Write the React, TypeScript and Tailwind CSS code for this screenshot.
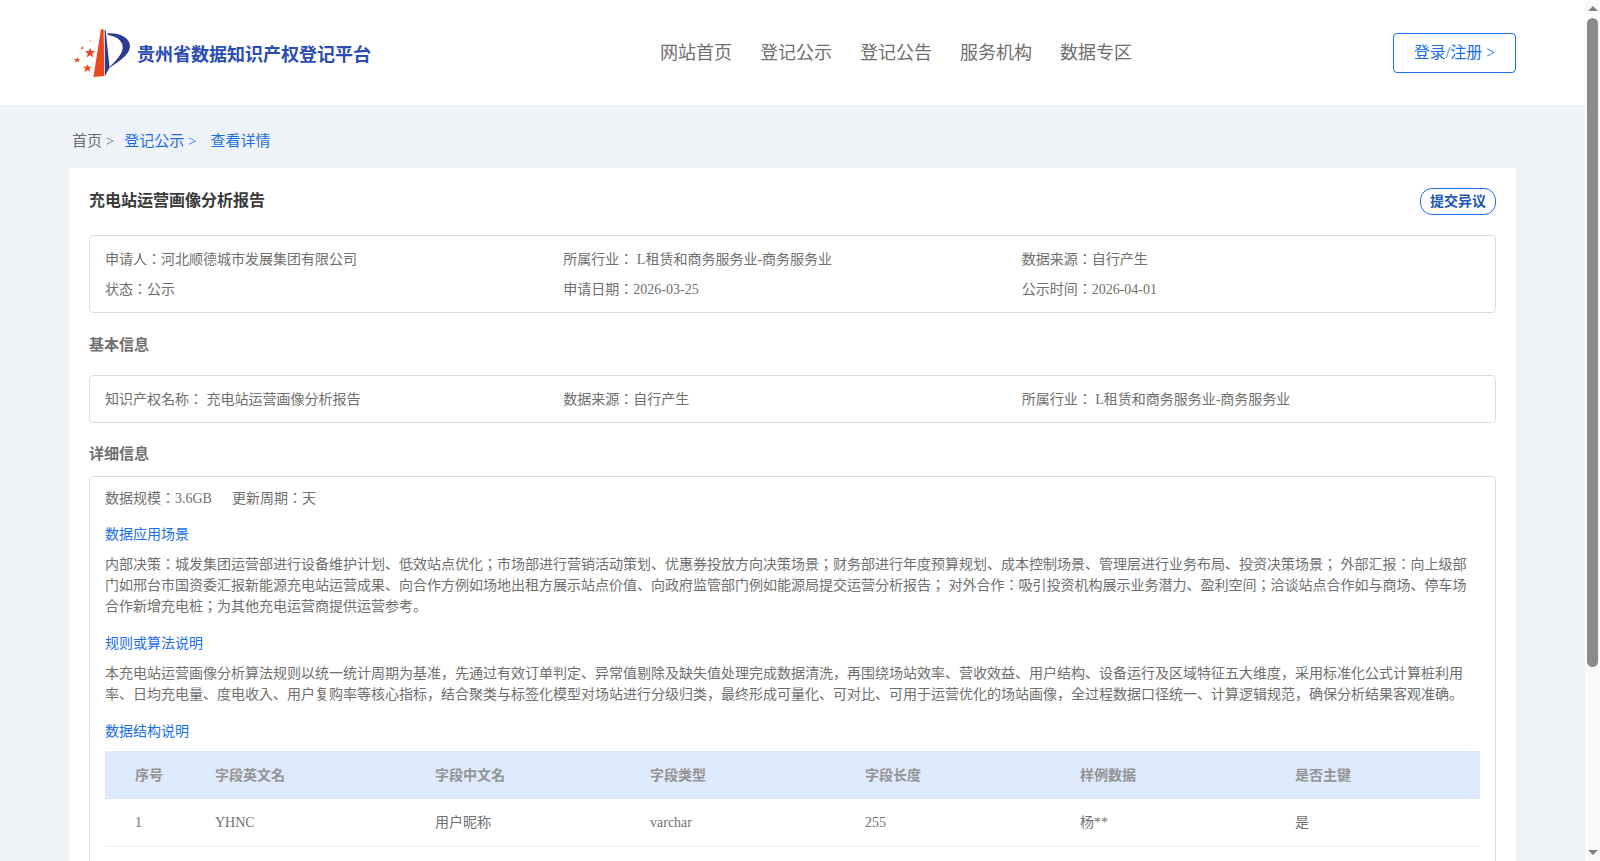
const serif = "font-['Liberation_Serif','Noto_Sans_CJK_JP',serif]";

const nav = ["网站首页", "登记公示", "登记公告", "服务机构", "数据专区"];
const columns = ["序号", "字段英文名", "字段中文名", "字段类型", "字段长度", "样例数据", "是否主键"];
const row = ["1", "YHNC", "用户昵称", "varchar", "255", "杨**", "是"];

function Logo() {
  return (
    <svg width="58" height="50" viewBox="65 52 176 152" className="shrink-0">
      <path d="M150 56 L158 56 L160 198 L127 201 Z" fill="#e8491d" />
      <path d="M161 58 L164 58 L176 172 L162 198 Z" fill="#2d3a92" />
      <path d="M170 68 C212 66 240 84 238 110 C236 136 200 156 172 176 C196 150 216 132 216 110 C216 90 196 76 170 73 Z" fill="#2d3a92" />
      <polygon points="117,112 121,122 132,122 123,130 127,142 117,135 106,142 110,130 101,122 113,122" fill="#e8491d" />
      <polygon points="109,162 112,170 122,170 114,176 118,186 109,180 99,186 103,176 95,170 105,170" fill="#e8491d" />
      <polygon points="78,140 80,146 87,146 82,150 84,157 78,153 71,157 73,150 68,146 76,146" fill="#e8491d" />
      <circle cx="93" cy="113" r="4" fill="#ee7a52" />
      <circle cx="118" cy="92" r="2.5" fill="#f0a080" />
    </svg>
  );
}

function Header() {
  return (
    <header className="flex h-[105px] items-center bg-white pl-[73px] pr-[69px]">
      <div className="flex w-[587px] items-center gap-[6px]">
        <Logo />
        <span className="pt-[5px] text-[18px] font-bold text-[#2b4db3]">贵州省数据知识产权登记平台</span>
      </div>
      <nav className="flex gap-[28px] pt-[2px] text-[18px] text-[#6f6f6f]">
        {nav.map((n) => (
          <a key={n}>{n}</a>
        ))}
      </nav>
      <button className="ml-auto h-[40px] w-[123px] rounded-[4px] border border-[#1a6fe8] pt-[1px] text-[16px] text-[#1a6fe8]">
        登录/注册 &gt;
      </button>
    </header>
  );
}

function InfoBox({ items }: { items: string[] }) {
  return (
    <div className="grid grid-cols-3 gap-y-[9px] rounded-[4px] border border-[#dddddd] px-[15px] pb-[12px] pt-[13px] text-[14px] leading-[21px] text-[#6f6f6f]">
      {items.map((t) => (
        <div key={t}>{t}</div>
      ))}
    </div>
  );
}

function Scrollbar() {
  return (
    <div className="flex w-[15px] shrink-0 flex-col items-center bg-[#fafafa]">
      <div className="mt-[6px] h-0 w-0 border-x-[5px] border-b-[5px] border-x-transparent border-b-[#808080]" />
      <div className="mt-[7px] h-[649px] w-[11px] rounded-[6px] bg-[#8a8a8a]" />
      <div className="mt-auto mb-[6px] h-0 w-0 border-x-[5px] border-t-[5px] border-x-transparent border-t-[#808080]" />
    </div>
  );
}

export default function App() {
  return (
    <div className={`${serif} flex h-screen overflow-hidden bg-[#eff2f6]`}>
      <div className="min-w-0 flex-1">
        <Header />
        <main className="px-[69px]">
          {/* breadcrumb */}
          <div className="flex h-[63px] items-center pl-[3px] pt-[10px] text-[15px] text-[#6f6f6f]">
            <span>首页 &gt;</span>
            <span className="ml-[10px] text-[#1a6fe8]">登记公示 &gt;</span>
            <span className="ml-[14px] text-[#1a6fe8]">查看详情</span>
          </div>

          {/* card */}
          <section className="bg-white px-[20px] pb-[250px] pt-[20px]">
            <div className="flex h-[27px] items-center justify-between">
              <h1 className="pb-[2px] text-[16px] font-bold text-[#3a3a3a]">充电站运营画像分析报告</h1>
              <button className="h-[27px] w-[76px] rounded-[12px] border border-[#1a6fe8] text-[14px] font-bold text-[#1c57b5]">
                提交异议
              </button>
            </div>

            <div className="mt-[20px]">
              <InfoBox
                items={[
                  "申请人：河北顺德城市发展集团有限公司",
                  "所属行业： L租赁和商务服务业-商务服务业",
                  "数据来源：自行产生",
                  "状态：公示",
                  "申请日期：2026-03-25",
                  "公示时间：2026-04-01",
                ]}
              />
            </div>

            <h2 className="mb-[19px] mt-[21px] text-[15px] font-bold leading-[22px] text-[#6f6f6f]">基本信息</h2>
            <InfoBox
              items={[
                "知识产权名称： 充电站运营画像分析报告",
                "数据来源：自行产生",
                "所属行业： L租赁和商务服务业-商务服务业",
              ]}
            />

            <h2 className="mb-[11px] mt-[20px] text-[15px] font-bold leading-[22px] text-[#6f6f6f]">详细信息</h2>
            <div className="rounded-[4px] border border-[#dddddd] px-[15px] pb-[20px] pt-[11px] text-[14px] leading-[21px] text-[#6f6f6f]">
              <div className="flex gap-[20px]">
                <span>数据规模：3.6GB</span>
                <span>更新周期：天</span>
              </div>

              <h3 className="mt-[15px] text-[#1a6fe8]">数据应用场景</h3>
              <p className="mt-[9px]">
                内部决策：城发集团运营部进行设备维护计划、低效站点优化；市场部进行营销活动策划、优惠券投放方向决策场景；财务部进行年度预算规划、成本控制场景、管理层进行业务布局、投资决策场景； 外部汇报：向上级部门如邢台市国资委汇报新能源充电站运营成果、向合作方例如场地出租方展示站点价值、向政府监管部门例如能源局提交运营分析报告； 对外合作：吸引投资机构展示业务潜力、盈利空间；洽谈站点合作如与商场、停车场合作新增充电桩；为其他充电运营商提供运营参考。
              </p>

              <h3 className="mt-[16px] text-[#1a6fe8]">规则或算法说明</h3>
              <p className="mt-[9px]">
                本充电站运营画像分析算法规则以统一统计周期为基准，先通过有效订单判定、异常值剔除及缺失值处理完成数据清洗，再围绕场站效率、营收效益、用户结构、设备运行及区域特征五大维度，采用标准化公式计算桩利用率、日均充电量、度电收入、用户复购率等核心指标，结合聚类与标签化模型对场站进行分级归类，最终形成可量化、可对比、可用于运营优化的场站画像，全过程数据口径统一、计算逻辑规范，确保分析结果客观准确。
              </p>

              <h3 className="mt-[16px] text-[#1a6fe8]">数据结构说明</h3>
              <div className="mt-[9px]">
                <div className="grid h-[48px] grid-cols-[110px_220px_215px_215px_215px_215px_1fr] items-center bg-[#deebfd] font-bold text-[#949494]">
                  {columns.map((c, i) => (
                    <div key={c} className={i === 0 ? "pl-[30px]" : ""}>
                      {c}
                    </div>
                  ))}
                </div>
                <div className="grid h-[48px] grid-cols-[110px_220px_215px_215px_215px_215px_1fr] items-center border-b border-[#eeeeee]">
                  {row.map((c, i) => (
                    <div key={i} className={i === 0 ? "pl-[30px]" : ""}>
                      {c}
                    </div>
                  ))}
                </div>
              </div>
            </div>
          </section>
        </main>
      </div>
      <Scrollbar />
    </div>
  );
}
